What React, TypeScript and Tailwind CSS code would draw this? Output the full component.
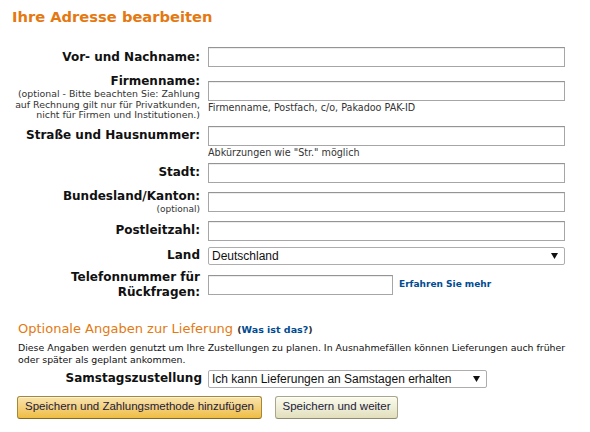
import React from "react";

const label = "text-[12px] font-bold leading-[15px] text-[#111] text-right";
const input =
  "h-[20px] border border-[#a6a6a6] border-t-[#949494] bg-white shadow-[inset_0_1px_0_rgba(0,0,0,0.07)] outline-none";

const Arrow = () => (
  <svg width="7" height="6" viewBox="0 0 7 6" className="shrink-0">
    <path d="M0 0 L7 0 L3.5 6 Z" fill="#111" />
  </svg>
);

const FakeSelect = ({ value, className }: { value: string; className: string }) => (
  <div
    className={
      "flex items-center justify-between whitespace-nowrap rounded-[2px] border border-[#adadad] bg-white pl-[3px] pr-[6px] font-['Liberation_Sans',Arial,sans-serif] text-[12px] leading-none text-[#111] " +
      className
    }
  >
    <span>{value}</span>
    <Arrow />
  </div>
);

export default function App() {
  return (
    <div className="h-[432px] w-[590px] overflow-hidden bg-white font-['Verdana','DejaVu_Sans',sans-serif] text-[#111]">
      <h1 className="pl-3 pt-[6px] text-[14.7px] font-bold leading-[22px] text-[#e47911]">
        Ihre Adresse bearbeiten
      </h1>

      {/* Adressfelder */}
      <div className="mt-[19px] flex flex-col">
        <div className="flex items-center">
          <div className={label + " w-[200px]"}>Vor- und Nachname:</div>
          <input className={input + " ml-2 w-[357px]"} />
        </div>

        <div className="mt-[7px] flex items-start">
          <div className="w-[200px] text-right">
            <div className={label}>Firmenname:</div>
            <div className="whitespace-nowrap text-[9.4px] leading-[10.5px] text-[#333]">
              (optional - Bitte beachten Sie: Zahlung
              <br />
              auf Rechnung gilt nur für Privatkunden,
              <br />
              nicht für Firmen und Institutionen.)
            </div>
          </div>
          <div className="ml-2 mt-[7px] flex flex-col">
            <input className={input + " w-[357px]"} />
            <span className="mt-px text-[9.6px] leading-[12px] text-[#333]">
              Firmenname, Postfach, c/o, Pakadoo PAK-ID
            </span>
          </div>
        </div>

        <div className="mt-[5px] flex items-start">
          <div className={label + " flex h-[20px] w-[200px] items-center justify-end"}>
            Straße und Hausnummer:
          </div>
          <div className="ml-2 flex flex-col">
            <input className={input + " w-[357px]"} />
            <span className="mt-px text-[9.6px] leading-[12px] text-[#333]">
              Abkürzungen wie "Str." möglich
            </span>
          </div>
        </div>

        <div className="mt-[4px] flex items-center">
          <div className={label + " w-[200px]"}>Stadt:</div>
          <input className={input + " ml-2 w-[357px]"} />
        </div>

        <div className="mt-[6px] flex items-start">
          <div className="w-[200px] text-right">
            <div className={label}>Bundesland/Kanton:</div>
            <div className="text-[9px] leading-[11px] text-[#333]">(optional)</div>
          </div>
          <input className={input + " ml-2 mt-[3px] w-[357px]"} />
        </div>

        <div className="mt-[6px] flex items-center">
          <div className={label + " w-[200px]"}>Postleitzahl:</div>
          <input className={input + " ml-2 w-[357px]"} />
        </div>

        <div className="mt-[6px] flex items-center">
          <div className={label + " w-[200px]"}>Land</div>
          <FakeSelect value="Deutschland" className="ml-2 h-[18px] w-[357px]" />
        </div>

        <div className="mt-[5px] flex items-center">
          <div className={label + " w-[200px]"}>
            Telefonnummer für
            <br />
            Rückfragen:
          </div>
          <input className={input + " ml-2 w-[185px]"} />
          <a className="ml-[6px] text-[9px] font-bold text-[#004b91]">Erfahren Sie mehr</a>
        </div>
      </div>

      {/* Optionale Angaben */}
      <div className="mt-[21px] pl-[18px] text-[13px] leading-[16px] text-[#e47911]">
        Optionale Angaben zur Lieferung{" "}
        <span className="text-[9.5px] font-bold text-[#333]">
          (<span className="text-[#004b91]">Was ist das?</span>)
        </span>
      </div>
      <p className="mt-[4px] pl-[18px] pr-[20px] text-[9.4px] leading-[12px] text-[#111]">
        Diese Angaben werden genutzt um Ihre Zustellungen zu planen. In Ausnahmefällen können
        Lieferungen auch früher oder später als geplant ankommen.
      </p>

      <div className="mt-[4px] flex items-center">
        <div className={label + " w-[202px]"}>Samstagszustellung</div>
        <FakeSelect
          value="Ich kann Lieferungen an Samstagen erhalten"
          className="ml-[6px] h-[18px] w-[279px]"
        />
      </div>

      <div className="mt-[8px] flex gap-[13px] whitespace-nowrap pl-[17px] font-['Liberation_Sans',Arial,sans-serif] text-[11.5px] text-[#1b1b3d]">
        <button className="h-[23px] w-[245px] rounded-[3px] border border-[#a88734] border-b-[#846a29] bg-gradient-to-b from-[#f8e3ad] to-[#efbd3e] shadow-[inset_0_1px_0_rgba(255,255,255,0.6)]">
          Speichern und Zahlungsmethode hinzufügen
        </button>
        <button className="h-[23px] w-[123px] rounded-[3px] border border-[#a9a68a] border-b-[#8f8c70] bg-gradient-to-b from-[#fbfbee] to-[#e2dfbd] shadow-[inset_0_1px_0_rgba(255,255,255,0.7)]">
          Speichern und weiter
        </button>
      </div>
    </div>
  );
}
